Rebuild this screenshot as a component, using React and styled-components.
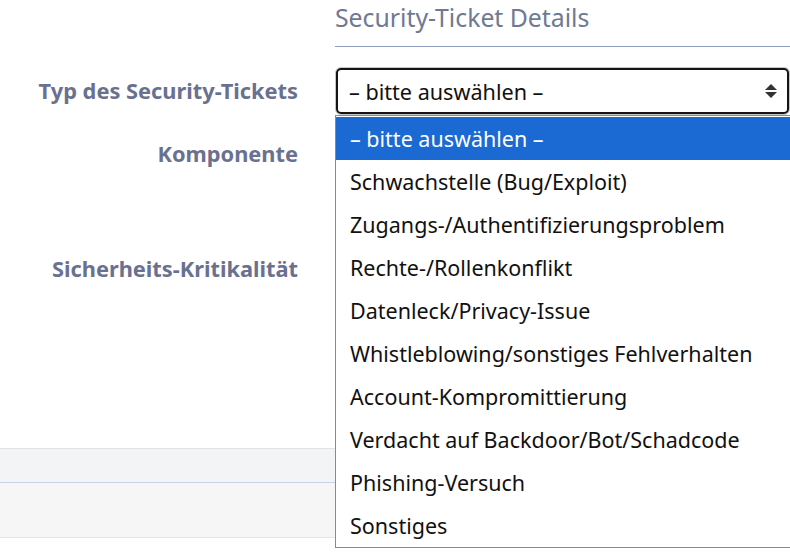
import React from "react";
import styled, { createGlobalStyle } from "styled-components";

const Global = createGlobalStyle`
  html, body { margin: 0; padding: 0; background: #fff; }
  body { font-family: "Noto Sans", "DejaVu Sans", sans-serif; overflow: hidden; }
`;

const Page = styled.div`
  width: 790px;
  height: 558px;
  overflow: hidden;
  position: relative;
`;

const Form = styled.div`
  display: grid;
  grid-template-columns: 298px 455px;
  column-gap: 37px;
  align-items: center;
`;

const Heading = styled.h2`
  grid-column: 2;
  margin: 0 0 20px 0;
  height: 47px;
  box-sizing: border-box;
  padding-top: 1px;
  border-bottom: 1px solid #8f9cc0;
  font-size: 24.8px;
  font-weight: 400;
  line-height: 32px;
  color: #6e7a93;
  white-space: nowrap;
`;

const Label = styled.label`
  grid-column: 1;
  text-align: right;
  font-size: 21.8px;
  font-weight: 700;
  color: #6a7190;
  white-space: nowrap;
  margin-top: ${(p) => p.$mt || 0}px;
`;

const Field = styled.div`
  grid-column: 2;
  position: relative;
  height: ${(p) => p.$h || 46}px;
  margin-top: ${(p) => p.$mt || 0}px;
`;

const SelectBox = styled.div`
  position: absolute;
  inset: 1px 1px 0 1px;
  border: 2px solid #141414;
  border-radius: 5px;
  box-shadow: 0 0 0 1px #c4c4c4;
  display: flex;
  align-items: center;
  justify-content: space-between;
  padding: 0 9px 0 11px;
  font-size: 21.6px;
  color: #111;
`;

const Input = styled.div`
  height: 100%;
  box-sizing: border-box;
  border: 1px solid #c9ccd2;
  border-radius: 4px;
`;

const Menu = styled.ul`
  position: absolute;
  top: 48px;
  left: 0;
  width: 455px;
  margin: 0;
  padding: 1px 0 0 0;
  list-style: none;
  background: #fff;
  border: 1px solid #8a8a8a;
  border-right: none;
  box-sizing: border-box;
  z-index: 5;
`;

const Option = styled.li`
  height: 43px;
  display: flex;
  align-items: center;
  padding-left: 14px;
  font-size: 21.5px;
  color: ${(p) => (p.$active ? "#fff" : "#111")};
  background: ${(p) => (p.$active ? "#1b69d3" : "#fff")};
  white-space: nowrap;
`;

const Footer = styled.div`
  margin-top: ${(p) => p.$mt}px;
`;

const Band = styled.div`
  height: ${(p) => p.$h}px;
  background: ${(p) => p.$bg};
  border-top: 1px solid ${(p) => p.$line};
`;

const Arrows = () => (
  <svg width="14" height="16" viewBox="0 0 14 16">
    <path d="M7 1 L13 7 H1 Z" fill="#333" />
    <path d="M7 15 L13 9 H1 Z" fill="#333" />
  </svg>
);

const options = [
  "– bitte auswählen –",
  "Schwachstelle (Bug/Exploit)",
  "Zugangs-/Authentifizierungsproblem",
  "Rechte-/Rollenkonflikt",
  "Datenleck/Privacy-Issue",
  "Whistleblowing/sonstiges Fehlverhalten",
  "Account-Kompromittierung",
  "Verdacht auf Backdoor/Bot/Schadcode",
  "Phishing-Versuch",
  "Sonstiges",
];

export default function App() {
  return (
    <Page>
      <Global />
      <Form>
        <Heading>Security-Ticket Details</Heading>

        <Label>Typ des Security-Tickets</Label>
        <Field $h={47}>
          <SelectBox>
            <span>– bitte auswählen –</span>
            <Arrows />
          </SelectBox>
          <Menu>
            {options.map((o, i) => (
              <Option key={o} $active={i === 0}>
                {o}
              </Option>
            ))}
          </Menu>
        </Field>

        <Label $mt={16}>Komponente</Label>
        <Field $mt={16} $h={46}>
          <Input />
        </Field>

        <Label $mt={69}>Sicherheits-Kritikalität</Label>
        <Field $mt={69} $h={47}>
          <Input />
        </Field>
      </Form>
      <Footer $mt={156}>
        <Band $h={33} $bg="#f3f4f6" $line="#dfe2e7" />
        <Band $h={54} $bg="#f6f6f6" $line="#c6d3e2" />
        <Band $h={0} $bg="#fff" $line="#e2e4e8" />
      </Footer>
    </Page>
  );
}
